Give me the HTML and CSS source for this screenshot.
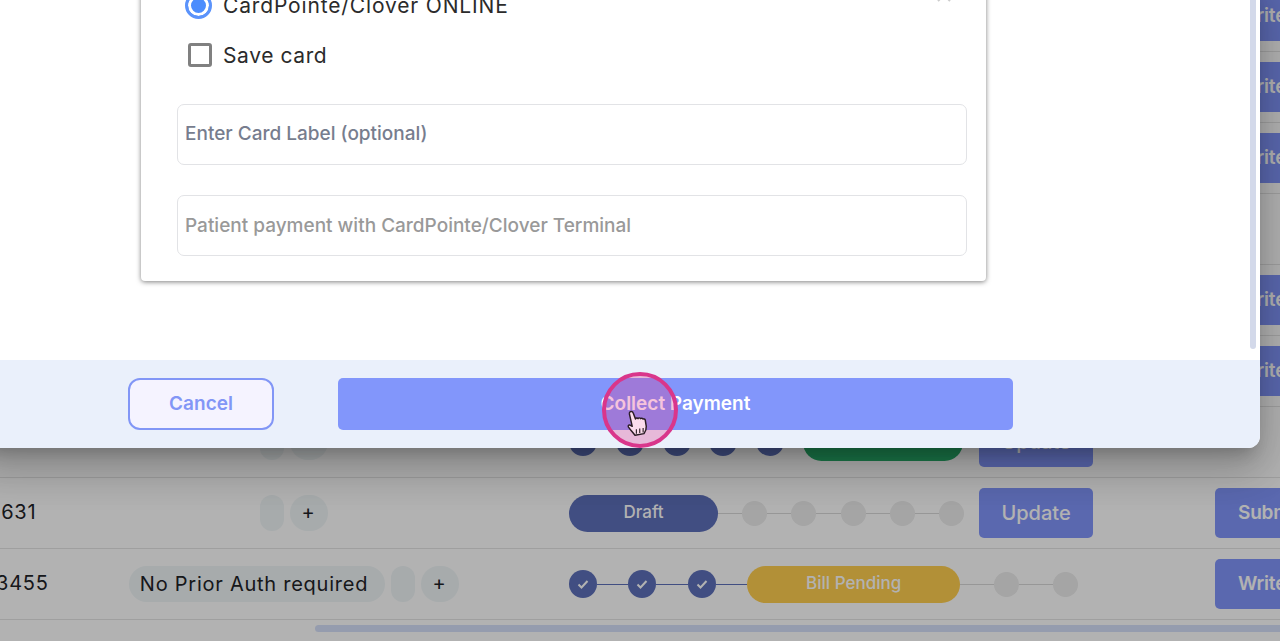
FILE: index.html
```html
<!DOCTYPE html>
<html lang="en">

<head>
  <meta charset="UTF-8">
  <meta name="viewport" content="width=device-width, initial-scale=1.0">
  <link rel="stylesheet" href="styles.css">
</head>

<body>
  <main class="claims">
    <div class="row"><a class="btn btn--wide">Write</a></div>
    <div class="row"><a class="btn btn--wide">Write</a></div>
    <div class="row"><a class="btn btn--wide">Write</a></div>
    <div class="row"></div>
    <div class="row"><a class="btn btn--wide">Write</a></div>
    <div class="row"><a class="btn btn--wide">Write</a></div>

    <div class="row">
      <div class="tags"><span class="tag tag--empty"></span><span class="tag tag--add">+</span></div>
      <div class="steps">
        <span class="dot dot--done"></span><i class="line line--done line--s"></i>
        <span class="dot dot--done"></span><i class="line line--done line--s"></i>
        <span class="dot dot--done"></span><i class="line line--done line--s"></i>
        <span class="dot dot--done"></span><i class="line line--done line--s"></i>
        <span class="dot dot--done"></span><i class="line line--done line--s"></i>
        <span class="status status--paid">Paid</span>
      </div>
      <a class="btn">Update</a>
    </div>

    <div class="row">
      <span class="row__id row__id--clipped">3631</span>
      <div class="tags"><span class="tag tag--empty"></span><span class="tag tag--add">+</span></div>
      <div class="steps">
        <span class="status status--draft">Draft</span><i class="line line--m"></i>
        <span class="dot"></span><i class="line line--m"></i>
        <span class="dot"></span><i class="line line--m"></i>
        <span class="dot"></span><i class="line line--m"></i>
        <span class="dot"></span><i class="line line--m"></i>
        <span class="dot"></span>
      </div>
      <a class="btn">Update</a>
      <a class="btn btn--wide">Submit</a>
    </div>

    <div class="row">
      <span class="row__id">3455</span>
      <div class="tags"><span class="tag tag--text">No Prior Auth required</span><span class="tag tag--empty"></span><span class="tag tag--add">+</span></div>
      <div class="steps">
        <span class="dot dot--done"><svg viewBox="0 0 16 16"><path d="M3.500 8.500l3 3 6-6.500" /></svg></span><i class="line line--done line--l"></i>
        <span class="dot dot--done"><svg viewBox="0 0 16 16"><path d="M3.500 8.500l3 3 6-6.500" /></svg></span><i class="line line--done line--l"></i>
        <span class="dot dot--done"><svg viewBox="0 0 16 16"><path d="M3.500 8.500l3 3 6-6.500" /></svg></span><i class="line line--done line--l"></i>
        <span class="status status--pending">Bill Pending</span><i class="line line--xl"></i>
        <span class="dot"></span><i class="line line--xl"></i>
        <span class="dot"></span>
      </div>
      <a class="btn btn--wide">Write</a>
    </div>
    <div class="hscroll"><div class="hscroll__thumb"></div></div>
  </main>

  <div class="backdrop"></div>

  <section class="modal">
    <div class="modal__body">
      <div class="card">
        <div class="option option--radio">
          <span class="radio"></span>
          <span>CardPointe/Clover ONLINE</span>
          <svg class="option__close" viewBox="0 0 16 16"><path d="M2 2l12 12M14 2L2 14" /></svg>
        </div>
        <div class="option">
          <span class="checkbox"></span>
          <span>Save card</span>
        </div>
        <div class="field"><span class="field__hint">Enter Card Label (optional)</span></div>
        <div class="field field--memo"><span class="field__hint field__hint--light">Patient payment with CardPointe/Clover Terminal</span></div>
      </div>
      <div class="modal__scroll"></div>
    </div>
    <footer class="modal__footer">
      <button class="action action--cancel">Cancel</button>
      <button class="action action--submit">Collect Payment</button>
    </footer>
  </section>

  <div class="pointer">
    <svg class="pointer__hand" viewBox="0 0 22 24">
      <path d="M4.500 1.500c1.300-.6 2.300 0 2.700 1.200l2 5.300c.3-1 1.700-1.200 2.300-.3.200-.9 1.800-1 2.300 0 .4-.7 1.800-.6 2.200.4.400-.4 1.600-.2 1.900.8l.9 5.600c.2 2.400-.6 4.500-2 6.500l-8 1.500c-1.400-2-3.800-4.400-5.800-7.300-.6-1-.1-2 1-1.900l2.300 1.200-2.500-11c-.1-.7.100-1.500.7-2z" />
      <path class="pointer__grip" d="M10 17v4M13 16.500v4M16 16v4" />
    </svg>
  </div>
</body>

</html>
```

FILE: styles.css
```css
* {
  box-sizing: border-box;
}

body {
  height: 641px;
  margin: 0;
  overflow: hidden;
  position: relative;
  background-color: #fff;
  color: #1f2328;
  font-family: "Inter", "Open Sans", sans-serif;
  font-size: 20px;
}

.claims {
  margin-top: -19px;
}

.row {
  display: grid;
  grid-template-columns: 128px 332px 109px 410px 236px 1fr;
  grid-template-rows: 70px;
  align-items: center;
  height: 71px;
  border-bottom: 1px solid #e4e4e4;
}

.row__id {
  grid-column: 1;
  margin-left: -4px;
  padding-bottom: 2px;
  letter-spacing: 0.8px;
}

.row__id--clipped {
  margin-left: -12px;
}

.tags {
  grid-column: 2;
  display: flex;
  justify-content: center;
  gap: 6px;
}

.tag {
  display: flex;
  align-items: center;
  justify-content: center;
  height: 36px;
  border-radius: 18px;
  background-color: #eff5f7;
  white-space: nowrap;
}

.tag--text {
  padding: 0 17px 1px 11px;
  letter-spacing: 0.75px;
}

.tag--empty {
  width: 24px;
  border-radius: 12px;
}

.tag--add {
  width: 38px;
  padding: 0 2px 3px 0;
}

.steps {
  grid-column: 4;
  display: flex;
  align-items: center;
}

.dot {
  display: flex;
  flex: 0 0 auto;
  width: 25px;
  height: 25px;
  border-radius: 50%;
  background-color: #ececec;
}

.dot--done {
  width: 28px;
  height: 28px;
  padding: 6px;
  background-color: #5d70ba;
}

.dot--done svg {
  fill: none;
  stroke: #fff;
  stroke-width: 2;
}

.line {
  display: block;
  flex: 0 0 auto;
  height: 1px;
  background-color: #d8d8d8;
}

.line--done {
  background-color: #5d70ba;
}

.line--s {
  width: 18.8px;
}

.line--m {
  width: 24.2px;
}

.line--l {
  width: 31.4px;
}

.line--xl {
  width: 34px;
}

.status {
  display: flex;
  flex: 0 0 auto;
  align-items: center;
  justify-content: center;
  height: 37px;
  padding-bottom: 2px;
  border-radius: 19px;
  color: #fff;
  font-size: 17px;
  font-weight: 500;
}

.status--paid {
  width: 160px;
  background-color: #28ae6a;
}

.status--draft {
  width: 149px;
  background-color: #5d70ba;
}

.status--pending {
  width: 213px;
  background-color: #ffce4f;
}

.btn {
  grid-column: 5;
  display: flex;
  align-items: center;
  justify-content: center;
  width: 114px;
  height: 50px;
  padding-bottom: 1px;
  border-radius: 5px;
  background-color: #8296fb;
  color: #fff;
  font-weight: 500;
}

.btn--wide {
  grid-column: 6;
  justify-content: flex-start;
  width: 130px;
  padding-left: 23px;
  font-size: 19px;
  font-weight: 600;
  letter-spacing: -0.2px;
}

.hscroll {
  padding: 5px 0 0 315px;
}

.hscroll__thumb {
  height: 7px;
  border-radius: 4px 0 0 4px;
  background-color: #d6e0f9;
}

.backdrop {
  position: absolute;
  inset: 0;
  background-color: rgba(0, 0, 0, 0.3);
}

.modal {
  position: absolute;
  top: -20px;
  left: -20px;
  display: flex;
  flex-direction: column;
  width: 1280px;
  height: 468px;
  border-radius: 0 0 12px 0;
  overflow: hidden;
  background-color: #fff;
  box-shadow: 0 11px 15px -7px rgba(0, 0, 0, 0.2), 0 24px 38px 3px rgba(0, 0, 0, 0.14), 0 9px 46px 8px rgba(0, 0, 0, 0.12);
}

.modal__body {
  display: flex;
  flex: 1;
  justify-content: space-between;
  padding: 0 4px 11px 161px;
}

.modal__scroll {
  width: 6px;
  border-radius: 0 0 3px 3px;
  background-color: #d3d9ea;
}

.card {
  width: 845px;
  height: 301px;
  padding: 0 19px 0 36px;
  border-radius: 0 0 4px 4px;
  background-color: #fff;
  box-shadow: 0 1px 5px rgba(0, 0, 0, 0.5);
}

.option {
  display: flex;
  align-items: center;
  gap: 11px;
  height: 50px;
  padding-left: 11px;
  color: #2b2b2b;
  font-size: 21px;
  letter-spacing: 0.6px;
}

.option--radio {
  padding-left: 8px;
  letter-spacing: 0.85px;
}

.option__close {
  width: 16px;
  height: 16px;
  margin: -21px 15px 0 auto;
  fill: none;
  stroke: #ccc;
  stroke-width: 2;
}

.radio {
  width: 27px;
  height: 27px;
  border: 3px solid #5b93fb;
  border-radius: 50%;
  background-color: #4c8dfd;
  box-shadow: inset 0 0 0 3px #fff;
}

.checkbox {
  width: 24px;
  height: 24px;
  border: 3px solid #808080;
  border-radius: 3px;
}

.field {
  display: flex;
  align-items: center;
  height: 61px;
  margin-top: 24px;
  padding: 0 7px 2px;
  border: 1px solid #e2e3e6;
  border-radius: 7px;
}

.field--memo {
  margin-top: 30px;
  padding-bottom: 0;
}

.field__hint {
  color: #777d8e;
  font-size: 19px;
  font-weight: 500;
}

.field__hint--light {
  color: #999;
}

.modal__footer {
  display: flex;
  align-items: center;
  gap: 64px;
  height: 88px;
  padding: 0 0 0 148px;
  background-color: #eaf0fb;
}

.action {
  height: 52px;
  padding-bottom: 2px;
  border: 0;
  font-family: inherit;
  font-size: 19px;
  font-weight: 600;
}

.action--cancel {
  width: 146px;
  border: 2px solid #8296f6;
  border-radius: 12px;
  background-color: #f5f3ff;
  color: #8296f6;
}

.action--submit {
  width: 675px;
  border-radius: 5px;
  background-color: #8296fb;
  color: #fff;
}

/* click highlight from the screen recording */
.pointer {
  position: absolute;
  top: 372px;
  left: 602px;
  display: flex;
  align-items: flex-end;
  justify-content: center;
  width: 76px;
  height: 76px;
  padding-bottom: 7px;
  border: 4px solid #d9368b;
  border-radius: 50%;
  background-color: rgba(224, 60, 140, 0.3);
}

.pointer__hand {
  width: 25px;
  height: 27px;
  margin-left: -6px;
  fill: #fbdcec;
  stroke: #2a1c24;
  stroke-width: 1.300;
  stroke-linejoin: round;
}

.pointer__grip {
  fill: none;
  stroke-width: 1;
}
```
